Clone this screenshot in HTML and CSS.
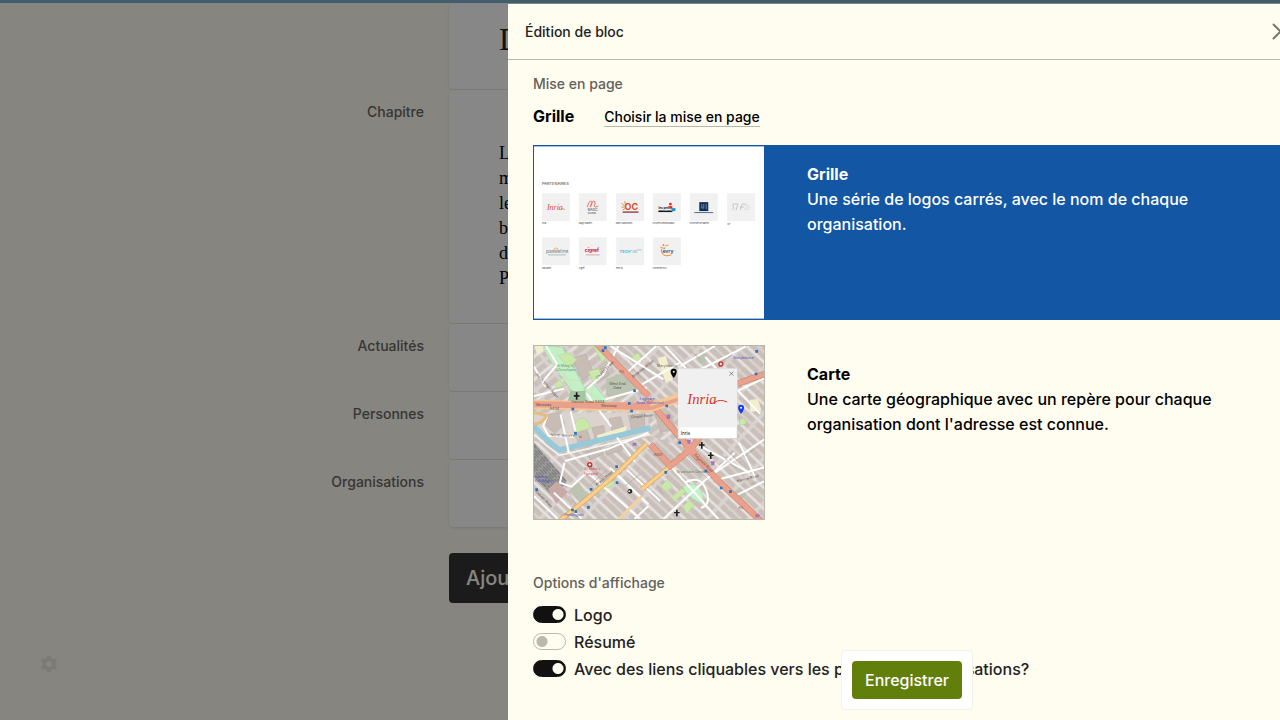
FILE: index.html
```html
<!DOCTYPE html>
<html lang="fr">
<head>
<meta charset="utf-8">
<title>Édition de bloc</title>
<link rel="stylesheet" href="styles.css">
</head>
<body>
<main class="page">
  <section class="blocks">
    <div class="block block-title"><h1>D</h1></div>
    <span class="block-label">Chapitre</span>
    <div class="block block-text"><p>L<br>m<br>le<br>b<br>d<br>P</p></div>
    <span class="block-label">Actualités</span>
    <div class="block"></div>
    <span class="block-label">Personnes</span>
    <div class="block"></div>
    <span class="block-label">Organisations</span>
    <div class="block block-last"></div>
    <button class="add" type="button">Ajouter</button>
  </section>
  <button class="settings" type="button" aria-label="Réglages">
    <svg viewBox="0 0 24 24" width="20" height="20"><path fill="currentColor" fill-rule="evenodd" d="M19.4 13c.1-.7.1-1.3 0-2l2.1-1.7c.2-.1.2-.4.1-.6l-2-3.500c-.1-.2-.4-.3-.6-.2l-2.500 1c-.5-.4-1.100-.7-1.700-1l-.4-2.600c0-.2-.2-.4-.5-.4h-4c-.3 0-.5.2-.5.4L9 5c-.6.300-1.200.6-1.700 1L4.800 5c-.2-.1-.5 0-.6.2l-2 3.500c-.1.2-.1.5.1.6L4.400 11c-.1.7-.1 1.300 0 2l-2.100 1.700c-.2.100-.2.400-.1.600l2 3.500c.1.200.400.300.6.200l2.500-1c.5.400 1.100.7 1.700 1l.4 2.600c0 .2.200.4.5.4h4c.3 0 .5-.2.5-.4l.4-2.600c.6-.3 1.200-.6 1.700-1l2.500 1c.2.100.5 0 .6-.2l2-3.500c.1-.2.100-.5-.1-.6zM12 15.500a3.500 3.500 0 1 1 0-7 3.500 3.500 0 0 1 0 7z"/></svg>
  </button>
</main>
<div class="backdrop"></div>
<div class="topbar"></div>

<aside class="panel" aria-labelledby="panel-title">
  <header class="panel-head">
    <h2 id="panel-title">Édition de bloc</h2>
    <button class="close" type="button" aria-label="Fermer">
      <svg viewBox="0 0 17 17" width="17" height="17"><path d="M1.500 1.500l14 14M15.500 1.500l-14 14" fill="none" stroke="#77766f" stroke-width="2" stroke-linecap="round"/></svg>
    </button>
  </header>
  <div class="panel-body">
    <h3 class="legend">Mise en page</h3>
    <div class="current"><strong>Grille</strong><a href="#layouts">Choisir la mise en page</a></div>

    <div class="layouts" id="layouts">
      <button class="layout selected" type="button">
        <svg class="thumb" viewBox="0 0 231 173" aria-hidden="true">
          <rect width="231" height="173" fill="#fff"/>
          <g fill="#f1f1f1">
            <path d="M8 47h28v28H8zM45 47h28v28H45zM82.500 47h28v28h-28zM119.500 47h28v28h-28zM156.500 47h28v28h-28zM194 47h28v28h-28zM8 91.500h28v28H8zM45 91.500h28v28H45zM82.500 91.500h28v28h-28zM119.500 91.500h28v28h-28z"/>
          </g>
          <g class="tiny">
            <text x="8" y="39" class="head">PARTENAIRES</text>
            <text x="8" y="78">Inria</text><text x="45" y="78">Magic makers</text><text x="82" y="78">Open Classrooms</text><text x="119" y="78">Les petits débrouillards</text><text x="156" y="78">Université de Nantes</text><text x="194" y="79">SIF</text>
            <text x="8" y="123">Pascaline</text><text x="45" y="123">Cigref</text><text x="82" y="123">Tech'IN</text><text x="119" y="123">Université Évry</text>
          </g>
          <text x="13" y="64" class="script" font-size="8" fill="#df4937">Inria</text><path d="M27 63.500q2-2 4 0" fill="none" stroke="#df4937" stroke-width=".6"/>
          <path d="M53.500 61q2-7 4-6t-1 6q2-7 4-6t0 5q1 2 4 0" fill="none" stroke="#f16f5e" stroke-width="1"/>
          <text x="54" y="65" font-size="3" fill="#333">MAGIC</text><text x="54" y="67.500" font-size="2" fill="#333">MAKERS</text>
          <path d="M88 57l3 3M91 55l1 4M88 61h3M89 64l3-2" stroke="#e7883a" stroke-width="1"/>
          <text x="91" y="64" font-size="9" font-weight="700" fill="#d44c25">OC</text><path d="M89 66h16" stroke="#8c1937" stroke-width="1.200"/>
          <text x="125" y="63" font-size="3" font-weight="700" fill="#111">les petits</text><text x="125" y="66" font-size="2" font-weight="700" fill="#111">débrouillards</text><path d="M125 65.500h14" stroke="#111" stroke-width="1"/>
          <circle cx="137" cy="58" r="1.500" fill="#e63027"/><path d="M135 60h4v2h-4z" fill="#e63027"/><path d="M138 62h4v3h-4z" fill="#1696cd"/>
          <rect x="166" y="56" width="9" height="9" fill="#12305c"/><path d="M168.500 58v4h2v-4M173 58v5" fill="none" stroke="#92aac2" stroke-width=".7"/><path d="M161 66.500h19" stroke="#536b91"/>
          <path d="M204 58q-6-1-4 2t-1 4M205 57l-2 7M207 64l2-6h4M207 61h4" fill="none" stroke="#b6bfbb" stroke-width=".8"/><path d="M212 59h4M212 61h5M211 63h5" stroke="#d0d3d1" stroke-width=".6"/>
          <text x="12" y="107" font-size="5" fill="#668392">pascaline</text><circle cx="22" cy="104" r="2" fill="none" stroke="#e49a53" stroke-width=".7"/><path d="M14 109h18" stroke="#90a7af" stroke-width=".7"/>
          <text x="51" y="106" font-size="5" font-weight="700" fill="#b8173f">cigref</text><path d="M52 109h14" stroke="#d6919f" stroke-width=".8"/>
          <text x="86" y="107" font-size="4" font-weight="700" fill="#41bbdd">TECH'</text><text x="99" y="107" font-size="4" fill="#839baa">IN</text><path d="M103 104h5" stroke="#66c2dd" stroke-width=".7"/>
          <path d="M127 101q2 2 5 1m-4 1q-1 3 2 6q3 2 8 0M132 100l3-1" fill="none" stroke="#ef8c2b" stroke-width="1"/><circle cx="130" cy="99" r="1" fill="#ef8c2b"/><text x="129" y="107" font-size="5" font-weight="700" fill="#315e92">évry</text>
        </svg>
        <span class="description"><strong>Grille</strong><br>Une série de logos carrés, avec le nom de chaque organisation.</span>
      </button>

      <button class="layout" type="button">
        <svg class="thumb" viewBox="0 0 693 519" preserveAspectRatio="none" aria-hidden="true">
          <defs>
            <pattern id="nw" width="76" height="54" patternUnits="userSpaceOnUse" patternTransform="rotate(-38)">
              <rect width="76" height="54" fill="#d9d2ce"/><path d="M5 6h29v11H5zM38 5h31v13H38zM5 34h18v12H5zM26 31h19v16H26zM49 33h20v14H49z" fill="#cbc0ba" stroke="#b9afa9" stroke-width="1"/><path d="M0 25h76" stroke="#f5f3f2" stroke-width="3"/>
            </pattern>
            <pattern id="se" width="92" height="46" patternUnits="userSpaceOnUse" patternTransform="rotate(43)">
              <rect width="92" height="46" fill="#d9d2ce"/><path d="M6 5h20v12H6zM29 5h26v12H29zM58 5h27v12H58zM6 30h34v11H6zM44 29h40v12H44z" fill="#cabfb9" stroke="#b9afa9" stroke-width="1"/><path d="M0 23h92" stroke="#f5f3f2" stroke-width="3"/>
            </pattern>
            <pattern id="rail" width="14" height="26" patternUnits="userSpaceOnUse" patternTransform="rotate(-42)">
              <rect width="14" height="26" fill="#a5a4a4"/><path d="M3 0v22M10 4v22" stroke="#777" stroke-width="4"/>
            </pattern>
          </defs>
          <rect width="693" height="519" fill="url(#nw)"/>
          <path d="M345 150l-155-150h503v520h-13L471 310 351 190z" fill="url(#se)"/>
          <path d="M0 285L180 310 351 270 471 310 680 519H0z" fill="url(#se)"/>
          <path d="M0 200h345v65L80 312 0 245z" fill="#dbd3ce"/>
          <g fill="#c8bcb5" stroke="#b2a7a1" stroke-width="1.500"><path d="M45 205l35-5 12 35-30 28-27-25zM122 252l35-9 13 39-38 8zM175 245l35-7 5 33-31 8zM226 218l35-6 10 34-36 9zM285 208l48-5v44l-39 7zM115 35l40-10 25 55-35 22zM190 75l25-12 12 24-24 13zM365 205l44 0 20 42-48 12zM160 315l35-15 15 24-40 18zM215 307l46-12 6 17-48 15z"/></g>
          <g fill="#c3f0c6" stroke="#a0dba9" stroke-width="2">
            <path d="M26 5q30-9 60 0l69 125-10 25-35-25-50-70zM150 130l30-15 42 50h-62z"/>
            <path d="M462 415q43-9 51 55h-15q-43-23-50-48z"/>
          </g>
          <path d="M38 14l80 111M73 12l-13 45 42 4-16 36 50 8M150 132l50 30M177 123l-10 38M464 421l39 42" stroke="#eeaea0" stroke-width="1.500" stroke-dasharray="4 4" fill="none"/>
          <path d="M110 135h45v30h-53z" fill="#a4c4a3"/>
          <g fill="#cbe8ab" stroke="#afd090" stroke-width="1.500">
            <path d="M73 29l30-10 26 22-24 24zM179 0h22l20 32-16 17zM61 113l18-12 10 18-20 8zM164 76l31-8 10 22-27 20zM295 33l18-13 13 18-18 14zM120 240q10-29 35-22l18 27-48 15zM181 432l55-28 7 10-59 32zM382 420l18-17 18 20-21 15zM413 454l34-27 10 10-34 30zM448 481l20-18 16 14-24 27zM619 222q17-10 20 3t-20 10z"/>
          </g>
          <path d="M2 0h26v16L10 28zM190 268l90-28-8 30-77 24zM372 37l25-8 20 72-20 9zM650 162l25-3 10 35-34 4z" fill="#f2efcf"/>
          <path d="M218 100l45-18 48 45-57 33-37-14zM110 430l24-24 32 55-20 18zM489 32l22-20 10 35-23 5zM603 438l18-14 20 20-16 14z" fill="#bcc3b0"/>
          <path d="M0 241Q35 282 77 312L260 268 351 245" fill="none" stroke="#98c9d8" stroke-width="17"/>
          <path d="M0 265Q35 299 77 328L260 286 351 265" fill="none" stroke="#f5f1ee" stroke-width="5"/>
          <path d="M0 290L100 405 60 455 0 393z" fill="url(#rail)"/>
          <path d="M42 430l26-24 35 32-36 36z" fill="#c7aaa5"/>
          <g fill="none" stroke="#fff" stroke-width="6">
            <path d="M0 62l35 60M28 105L70 55 36 0M0 150l90-22M160 128l49-43 56-105M158 142l75 100M215 160l125-35M230 0l160 100M282 78L368 0M324 116L440 50M395 0l220 235M441 60L545 0M516 33l165 170M504 69l133-67M612 135l81-38M80 205l25 115M110 196l15 60M40 210l-12 30 16 29 92 5M93 345L220 310 345 260M92 350l-14 60 35 12 48-44M160 379l158 138M229 365l116 110M325 315l-126 108M280 372l100 93M411 360l145 160M390 519L605 320M530 390l164-110M550 402l144-38M596 455l97-49M500 300l150 80M618 290l50 107M0 450l73 70M60 440l83 78M345 480l-42 39M250 275l55 73M453 410q47-25 65 20t-15 56"/>
          </g>
          <g fill="none" stroke="#aaa19c" stroke-width="2"><path d="M103 438l22 35M220 370l-50 48M274 420l45-35M455 334l68 64M567 328l38 38M578 310l49 48M635 330l35-25M650 417l25-12M367 391l31-20M388 445l-18-28M472 15l29 25M569 45l29-20M250 35l-22 20M293 68l43 35"/></g>
          <g fill="none"><path d="M75 525Q180 445 260 372L340 292M325 430L411 360" stroke="#d8a75f" stroke-width="14"/><path d="M75 525Q180 445 260 372L340 292M325 430L411 360" stroke="#fbcf8b" stroke-width="10"/><path d="M250 525L325 450" stroke="#f3d29b" stroke-width="8"/></g>
          <g fill="none" stroke="#cc7f65"><path d="M190-5l155 155M613 113l83-30M345 163l126 147 80 90 142 134M351 295l60 65 60-50 52-65" stroke-width="19"/></g>
          <g fill="none" stroke="#e9a18d"><path d="M190-5l155 155M345 163l126 147 80 90 142 134M351 295l60 65 60-50 52-65M613 113l83-30" stroke-width="16"/><path d="M0 175l351 9 90-29" stroke="#f5c994" stroke-width="28"/><path d="M0 178l351 9 90-29M0 171l351 5" stroke-width="11"/></g>
          <path d="M0 199l38 10Q27 232 0 235" fill="none" stroke="#e5bd7c" stroke-width="9"/>
          <circle cx="471" cy="310" r="17" fill="#e9a18d"/><circle cx="551" cy="399" r="13" fill="#e9a18d"/>
          <g class="map-text">
            <text x="68" y="62" fill="#679575">St Mary's</text><text x="68" y="74" fill="#679575">Churchyard</text><text x="227" y="118">West End</text><text x="239" y="130">Gate</text>
            <text x="5" y="179">Westway</text><text x="113" y="172">Harrow Road A404</text><text x="202" y="184">Westway</text><text x="47" y="192">A404</text><text x="257" y="80" fill="#a34838">A5</text><text x="616" y="490" fill="#a34838">A5</text><text x="361" y="331">A501</text>
            <text x="318" y="162" fill="#5652bd">Edgware</text><text x="308" y="174" fill="#5652bd">Road (Bakerloo)</text><text x="600" y="39" fill="#5652bd">Marylebone</text><text x="2" y="397" fill="#5652bd">London</text><text x="2" y="409" fill="#5652bd">Paddington</text><text x="91" y="511" fill="#5652bd">Paddington</text>
            <text x="151" y="373" fill="#d14646">St Mary's</text><text x="151" y="386" fill="#d14646">Hospital</text><text x="370" y="62" fill="#756c5e">Marylebone</text><text x="430" y="381" fill="#697b5b">Bryanston Gardens</text>
            <text transform="translate(5 86) rotate(48)">North Wharf Road</text><text transform="translate(190 100) rotate(-44)">Church Street</text><text transform="translate(299 96) rotate(-38)">Broadley Street</text><text transform="translate(190 420) rotate(-40)">Praed Street</text><text transform="translate(481 328) rotate(44)">Edgware Road</text><text transform="translate(612 409) rotate(-14)">Harrow Road</text><text transform="translate(4 438) rotate(46)">Craven Road</text><text transform="translate(292 217) rotate(-5)">Chapel Road</text><text transform="translate(50 270) rotate(4)">North Wharf Road</text>
          </g>
          <g fill="#2674be"><path d="M204 10h8v8h-8zM211 1h8v8h-8zM299 130h8v8h-8zM113 185h8v8h-8zM283 168h8v8h-8zM290 191h8v8h-8zM121 258h8v8h-8zM245 358h8v8h-8zM168 426h8v8h-8zM246 406h8v8h-8zM112 488h8v8h-8zM122 493h8v8h-8zM160 480h8v8h-8zM393 375h8v8h-8zM514 371h8v8h-8zM560 422h8v8h-8zM588 433h8v8h-8zM667 12h8v8h-8zM665 80h8v8h-8zM435 286h8v8h-8zM4 427h8v8H4zM396 176h8v8h-8z"/></g>
          <g fill="#1d1d1d"><path d="M126 139h5v8h6v5h-6v9h-5v-9h-6v-5h6zM503 288h5v7h6v4h-6v9h-5v-9h-6v-4h6zM530 319h5v7h6v4h-6v9h-5v-9h-6v-4h6zM428 491h5v7h6v4h-6v9h-5v-9h-6v-4h6z"/></g>
          <circle cx="289" cy="436" r="7" fill="#222"/><circle cx="287" cy="436" r="3" fill="#eee"/>
          <g fill="#c62e30"><circle cx="168" cy="356" r="8"/><circle cx="563" cy="54" r="8"/></g><path d="M164 356h8M168 352v8M559 54h8M563 50v8" stroke="#fff" stroke-width="3"/>
          <path d="M400 206h10v13h-10zM461 281h12l-2 12h-8zM533 346h12l-2 12h-8zM297 290h12v9h-12zM667 505h12v9h-12z" fill="#a873b8"/>
          <path d="M421 96q-9-12-9-19a9 9 0 1 1 18 0q0 7-9 19z" fill="#000"/><circle cx="421" cy="77" r="3" fill="#fff"/>
          <path d="M624 204q-9-12-9-19a9 9 0 1 1 18 0q0 7-9 19z" fill="#143ff0"/><circle cx="624" cy="185" r="3" fill="#fff"/>
          <rect x="434" y="68" width="178" height="210" fill="#fff" stroke="#ccc" stroke-width="2"/><rect x="434" y="68" width="178" height="176" fill="#f0f0f0"/>
          <path d="M589 77l12 12M601 77l-12 12" stroke="#555" stroke-width="2"/>
          <text x="462" y="173" class="script" font-size="44" fill="#d93424">Inria</text><path d="M545 169q14-11 37-1" fill="none" stroke="#d93424" stroke-width="3"/>
          <text x="442" y="266" font-size="14" fill="#222">Inria</text>
        </svg>
        <span class="description"><strong>Carte</strong><br>Une carte géographique avec un repère pour chaque organisation dont l'adresse est connue.</span>
      </button>
    </div>

    <h3 class="legend">Options d'affichage</h3>
    <div class="options">
      <label><input type="checkbox" role="switch" checked>Logo</label>
      <label><input type="checkbox" role="switch">Résumé</label>
      <label><input type="checkbox" role="switch" checked>Avec des liens cliquables vers les pages des organisations?</label>
    </div>
  </div>
  <div class="save-box"><button class="save" type="submit">Enregistrer</button></div>
</aside>
</body>
</html>
```

FILE: styles.css
```css
* { box-sizing: border-box; }
body {
  margin: 0;
  background: #fffcf0;
  font-family: Inter, "Noto Sans", sans-serif;
  font-weight: 500;
  color: #222;
  overflow: hidden;
}
button { font: inherit; border: 0; cursor: pointer; }
h1, h2, h3, p { margin: 0; font-weight: inherit; }

.page { min-height: 100vh; padding-top: 4px; }
.blocks {
  display: grid;
  grid-template-columns: 424px 1fr;
  column-gap: 25px;
}
.block {
  grid-column: 2;
  min-height: 67px;
  margin-bottom: 1px;
  background: #fff;
  border-radius: 4px;
  box-shadow: 0 1px 3px rgba(0, 0, 0, .12);
}
.block-title { height: 85px; padding: 14px 50px; font-family: "Liberation Serif", serif; }
.block-title h1 { font-size: 32px; line-height: 42px; font-weight: 400; }
.block-text { padding: 51px 50px 32px; font-family: "Liberation Serif", serif; font-size: 18px; line-height: 25px; font-weight: 400; color: #000; }
.block-label { padding-top: 12px; text-align: right; font-size: 14px; line-height: 20px; color: #666; }
.add {
  grid-column: 2;
  justify-self: start;
  height: 50px;
  margin-top: 25px;
  padding: 0 17px;
  border-radius: 4px;
  background: #333;
  color: #fffcf0;
  font-size: 20px;
}
.settings { display: block; margin: 51px 0 0 39px; padding: 0; width: 20px; height: 20px; background: none; color: #e8e6dc; }
.settings svg { display: block; }
.backdrop { position: fixed; inset: 0; background: rgba(0, 0, 0, .47); }
.topbar { position: fixed; inset: 0 0 auto; height: 4px; background: #465d69; border-bottom: 1px solid #748894; }

.panel {
  position: fixed;
  inset: 4px -26px 0 508px;
  display: flex;
  flex-direction: column;
  background: #fffcf0;
}
.panel-head {
  display: flex;
  align-items: center;
  justify-content: space-between;
  height: 56px;
  padding: 0 17px;
  border-bottom: 1px solid #b8b7ac;
}
.panel-head h2 { font-size: 14px; }
.close { padding: 0; background: none; }
.close svg { display: block; }
.panel-body { padding: 14px 25px; }
.legend { font-size: 14px; line-height: 20px; color: #62615b; }
.current { display: flex; align-items: center; gap: 30px; height: 25px; margin-top: 9px; font-size: 16px; color: #000; }
.current a { margin-top: 3px; color: inherit; font-size: 14px; line-height: 18px; text-decoration: none; border-bottom: 1px solid #b8b7ac; }

.layouts { display: flex; flex-direction: column; gap: 25px; margin: 17px 0 53px; }
.layout {
  display: flex;
  align-items: flex-start;
  gap: 42px;
  padding: 0;
  background: none;
  color: #000;
  text-align: left;
}
.layout.selected { background: #1256a4; color: #fff; }
.thumb { display: block; flex: none; width: 232px; height: 175px; border: 1px solid #b8b7ac; font-weight: 400; }
.selected .thumb { border-color: #1256a4; }
.description { flex: 1; max-width: 430px; padding-top: 17px; font-size: 16px; line-height: 25px; }
.tiny { font-size: 2px; fill: #333; }
.tiny .head { font-size: 4px; }
.script { font-family: "Liberation Serif", serif; font-style: italic; }
.map-text { font-size: 11px; fill: #55504d; }

.options { margin-top: 8px; }
.options label { display: flex; align-items: center; gap: 8px; height: 27px; font-size: 16px; }
.options input {
  appearance: none;
  width: 33px;
  height: 17px;
  margin: 0;
  border: 1px solid #bab9ae;
  border-radius: 9px;
  background: radial-gradient(circle at 8px 50%, #bab9ae 5px, transparent 6px);
}
.options input:checked { border-color: #111; background: radial-gradient(circle at 24px 50%, #fffcf0 5px, #111 6px); }

.save-box {
  position: absolute;
  bottom: 10px;
  left: 50%;
  transform: translateX(-50%);
  padding: 10px;
  background: #fff;
  border: 1px solid #f3f1e6;
  border-radius: 4px;
}
.save { display: block; height: 38px; padding: 0 13px; border-radius: 4px; background: #637f0b; color: #fff; font-size: 16px; }
```
